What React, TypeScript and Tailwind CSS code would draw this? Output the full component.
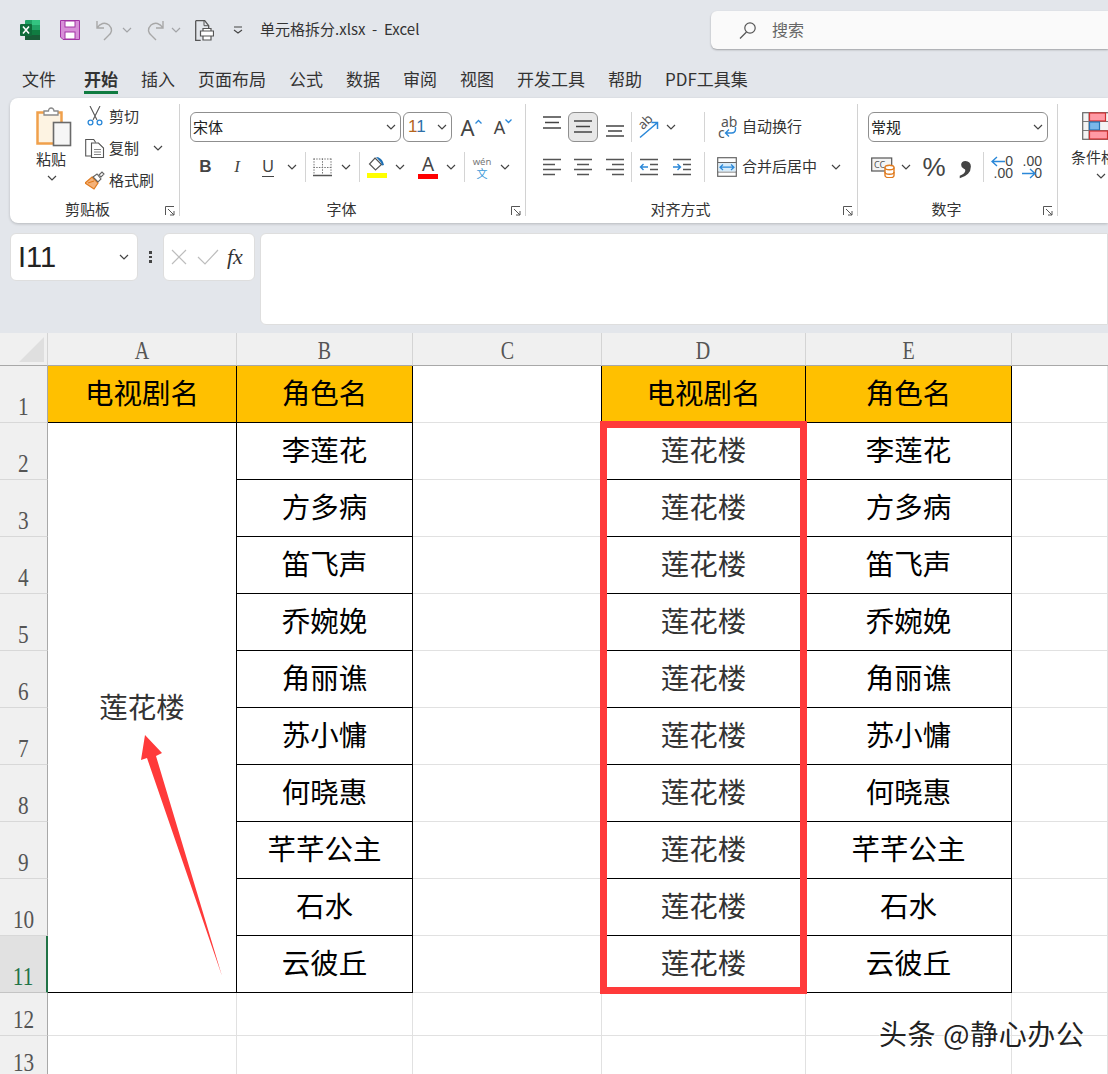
import type { ReactNode } from "react";

const tabs = ["文件", "开始", "插入", "页面布局", "公式", "数据", "审阅", "视图", "开发工具", "帮助", "PDF工具集"];
const columns = ["A", "B", "C", "D", "E"];
const roles = ["李莲花", "方多病", "笛飞声", "乔婉娩", "角丽谯", "苏小慵", "何晓惠", "芊芊公主", "石水", "云彼丘"];
const rowNumbers = [1, 2, 3, 4, 5, 6, 7, 8, 9, 10, 11, 12, 13];

function Chevron({ className = "" }: { className?: string }) {
  return (
    <svg width="10" height="6" viewBox="0 0 10 6" className={className}>
      <path d="M1 1l4 4 4-4" fill="none" stroke="#444" strokeWidth="1.2" />
    </svg>
  );
}

function Sep({ className = "" }: { className?: string }) {
  return <div className={`h-[30px] w-px bg-[#d4d4d4] ${className}`} />;
}

function Launcher() {
  return (
    <svg width="10" height="10" viewBox="0 0 10 10">
      <path d="M.5 9V.5H9M3 3l6 6M9 5v4H5" fill="none" stroke="#555" strokeWidth="1" />
    </svg>
  );
}

function Group({
  label,
  className,
  labelClass = "pr-[18px]",
  children,
}: {
  label: string;
  className: string;
  labelClass?: string;
  children: ReactNode;
}) {
  return (
    <div className={`flex h-[112px] shrink-0 flex-col border-r border-[#d2d2d2] ${className}`}>
      <div className="flex-1">{children}</div>
      <div className="grid grid-cols-[1fr_auto_1fr] items-end pr-[4px] text-[15px] leading-[14px] text-[#333]">
        <span />
        <span className={labelClass}>{label}</span>
        <span className="justify-self-end">
          <Launcher />
        </span>
      </div>
    </div>
  );
}

function Slot({ className, children }: { className: string; children?: ReactNode }) {
  return <div className={`flex h-[26px] shrink-0 items-center justify-center ${className}`}>{children}</div>;
}

function Combo({ className, children }: { className: string; children: ReactNode }) {
  return (
    <div className={`flex h-[30px] shrink-0 items-center justify-between rounded-md border border-[#8f8f8f] pl-[2px] pr-[4px] ${className}`}>
      <span className="text-[15px] text-[#222]">{children}</span>
      <Chevron />
    </div>
  );
}

// vertical alignment buttons, three lines placed at the given heights
function VAlign({ ys }: { ys: number[] }) {
  return (
    <svg width="20" height="30" viewBox="0 0 20 30">
      <path d={`M1 ${ys[0]}H19M3 ${ys[1]}H17M1 ${ys[2]}H19`} stroke="#444" strokeWidth="1.4" fill="none" />
    </svg>
  );
}

function AlignLines({ kind }: { kind: "left" | "center" | "right" }) {
  const a = kind === "left" ? "1" : kind === "center" ? "4" : "7";
  const b = kind === "left" ? "13" : kind === "center" ? "16" : "19";
  return (
    <svg width="20" height="20" viewBox="0 0 20 20">
      <path d={`M1 2.5H19M${a} 7.5H${b}M1 12.5H19M${a} 17.5H${b}`} stroke="#555" strokeWidth="1.4" fill="none" />
    </svg>
  );
}

function Indent({ out }: { out: boolean }) {
  return (
    <svg width="20" height="20" viewBox="0 0 20 20">
      <path d="M1 2.5H19M11 7.5H19M11 12.5H19M1 17.5H19" stroke="#555" strokeWidth="1.3" fill="none" />
      <path d={out ? "M9 10H1.5M4.5 7l-3 3 3 3" : "M1 10H8.5M5.5 7l3 3-3 3"} stroke="#2b88d8" strokeWidth="1.4" fill="none" />
    </svg>
  );
}

function ExcelLogo() {
  return (
    <svg width="20" height="20" viewBox="0 0 20 20">
      <rect x="5" y="0" width="15" height="20" rx="1" fill="#21a366" />
      <rect x="12" y="0" width="8" height="5" fill="#33c481" />
      <rect x="12" y="5" width="8" height="5" fill="#21a366" />
      <rect x="5" y="10" width="15" height="5" fill="#107c41" />
      <rect x="5" y="15" width="15" height="5" fill="#185c37" />
      <rect x="0" y="4" width="12" height="12" rx="1" fill="#0f6b3a" />
      <path d="M3 6.5l6 7M9 6.5l-6 7" stroke="#fff" strokeWidth="1.6" />
    </svg>
  );
}

function SaveIcon() {
  return (
    <svg width="20" height="20" viewBox="0 0 20 20">
      <path d="M.5.5h19v19H3L.5 17z" fill="#d78fd8" stroke="#a334a5" />
      <rect x="5" y="1" width="10" height="6" fill="#fff" stroke="#a334a5" />
      <rect x="5" y="12" width="10" height="7" fill="#fff" stroke="#a334a5" />
    </svg>
  );
}

function UndoIcon({ flip = false }: { flip?: boolean }) {
  return (
    <svg width="19" height="21" viewBox="0 0 19 21" className={flip ? "-scale-x-100" : ""}>
      <path d="M1 1v7h7M1 8c3-5 8-6 12-3 4 4 3 8-1 11l-4 4" fill="none" stroke="#a8a8a8" strokeWidth="1.4" />
    </svg>
  );
}

function PreviewIcon() {
  return (
    <svg width="19" height="21" viewBox="0 0 19 21">
      <path d="M.7.7h9l4 5v3M.7.7v19.6h5" fill="none" stroke="#555" strokeWidth="1.3" />
      <path d="M9 .7v5h4.7" fill="none" stroke="#555" strokeWidth="1" />
      <path d="M5.5 11h13v5h-13zM8 8.5h8V11H8zM8 16h8v4H8z" fill="#fff" stroke="#555" strokeWidth="1.2" />
    </svg>
  );
}

function SearchIcon() {
  return (
    <svg width="18" height="18" viewBox="0 0 18 18">
      <circle cx="11" cy="7" r="5.2" fill="none" stroke="#555" strokeWidth="1.2" />
      <path d="M7.5 11L1 17.5" stroke="#555" strokeWidth="1.2" />
    </svg>
  );
}

function PasteIcon() {
  return (
    <svg width="36" height="40" viewBox="0 0 36 40">
      <path d="M1.5 5.5h24v31h-24z" fill="#fdf3e2" stroke="#f0a04b" strokeWidth="2.5" />
      <path d="M8 8V4h4.5c0-4 5-4 5.5 0h4v4z" fill="#fff" stroke="#8a8a8a" strokeWidth="1.3" />
      <rect x="17.5" y="15.5" width="17" height="23" fill="#f6f6f6" stroke="#6a6a6a" strokeWidth="1.6" />
    </svg>
  );
}

function ScissorsIcon() {
  return (
    <svg width="16" height="20" viewBox="0 0 16 20">
      <path d="M3 0l7 14M13 0L6 14" stroke="#555" strokeWidth="1.1" fill="none" />
      <circle cx="3.5" cy="16.5" r="2.4" fill="none" stroke="#2b88d8" strokeWidth="1.3" />
      <circle cx="12.5" cy="16.5" r="2.4" fill="none" stroke="#2b88d8" strokeWidth="1.3" />
    </svg>
  );
}

function CopyIcon() {
  return (
    <svg width="20" height="20" viewBox="0 0 20 20">
      <path d="M6 18H.7V1.5h8l2 3" fill="none" stroke="#555" strokeWidth="1.1" />
      <path d="M6.5 5h7l5 5v9.5h-12z" fill="#fff" stroke="#555" strokeWidth="1.1" />
      <path d="M9 11.5h7M9 14h7M9 16.5h7" stroke="#777" strokeWidth="0.9" />
    </svg>
  );
}

function BrushIcon() {
  return (
    <svg width="20" height="19" viewBox="0 0 20 19">
      <path d="M7 6l6 6-4 6-9-6z" fill="#f4b27a" stroke="#e07b1f" strokeWidth="1.2" />
      <path d="M3 12l6-2" stroke="#e07b1f" strokeWidth="1.2" />
      <path d="M8 6l4-3 4 5-3 3z" fill="#fff" stroke="#666" strokeWidth="1.1" />
      <path d="M14 4l3-3 2 2-3 3z" fill="#fff" stroke="#666" strokeWidth="1.1" />
    </svg>
  );
}

function BordersIcon() {
  return (
    <svg width="19" height="19" viewBox="0 0 19 19">
      <path d="M.5 1H18.5M.5 9.5H18.5M1 .5V16M9.5.5V16M18 .5V16" stroke="#777" strokeWidth="1" strokeDasharray="1.5 1.2" fill="none" />
      <path d="M0 17.5H19" stroke="#555" strokeWidth="1.6" />
    </svg>
  );
}

function FillIcon() {
  return (
    <svg width="20" height="22" viewBox="0 0 20 22">
      <path d="M8 2l6.5 6.5L8.5 14 2.5 8z" fill="#fff" stroke="#555" strokeWidth="1.2" />
      <path d="M9 1c3 0 6 2 7 5l1 3-2 .5-1-3z" fill="#1c6fb5" />
      <rect x="0" y="17" width="20" height="5" fill="#ffff00" />
    </svg>
  );
}

function FontColorIcon() {
  return (
    <div className="flex w-[20px] flex-col items-center">
      <span className="text-[19px] leading-[17px] text-[#444] [font-family:'Noto_Sans',sans-serif]">A</span>
      <div className="mt-[1px] h-[5px] w-[20px] bg-[#ff0000]" />
    </div>
  );
}

function OrientIcon() {
  return (
    <svg width="22" height="22" viewBox="0 0 22 22" className="overflow-visible">
      <text x="1" y="11" fontSize="13" fill="#555" transform="rotate(-45 7 8)" fontFamily="Noto Sans">ab</text>
      <path d="M2 21.5L19 7M13.5 6.5h6V13" stroke="#2b88d8" strokeWidth="1.5" fill="none" />
    </svg>
  );
}

function WrapIcon() {
  return (
    <div className="relative h-[22px] w-[20px] text-[14px] leading-[11px] text-[#555] [font-family:'Noto_Sans',sans-serif]">
      <span className="block pl-[3px]">ab</span>
      <span className="block">c</span>
      <svg width="20" height="22" viewBox="0 0 20 22" className="absolute left-0 top-0">
        <path d="M17.5 11v2c0 3-1 4-4 4H8M11 13.5L7.5 17l3.5 3.5" stroke="#2b88d8" strokeWidth="1.4" fill="none" />
      </svg>
    </div>
  );
}

function MergeIcon() {
  return (
    <svg width="20" height="20" viewBox="0 0 20 20">
      <rect x=".7" y=".7" width="18.6" height="18.6" fill="#fff" stroke="#666" strokeWidth="1.2" />
      <path d="M.7 5.5H19.3M.7 15H19.3" stroke="#666" strokeWidth="1.2" />
      <rect x="1.5" y="6" width="17" height="8.5" fill="#d7ecfa" />
      <path d="M3 10.2H17M6 7.5l-3 2.7L6 13M14 7.5l3 2.7L14 13" stroke="#2b88d8" strokeWidth="1.2" fill="none" />
    </svg>
  );
}

function FormatIcon() {
  return (
    <svg width="24" height="22" viewBox="0 0 24 22">
      <rect x=".7" y="2" width="20" height="13" fill="#f4f4f4" stroke="#555" strokeWidth="1.2" />
      <text x="3" y="12" fontSize="9" fill="#555" fontFamily="Noto Sans">CC</text>
      <path d="M14 11.5c0-3 9-3 9 0v8c0 3-9 3-9 0z" fill="#fff" stroke="#e07b1f" strokeWidth="1.4" />
      <path d="M14 11.5c0 3 9 3 9 0M14 16c0 3 9 3 9 0" fill="none" stroke="#e07b1f" strokeWidth="1.4" />
    </svg>
  );
}

function DecimalIcon({ more }: { more: boolean }) {
  return (
    <div className={`relative h-[24px] w-[24px] text-right text-[14px] leading-[12px] text-[#444] [font-family:'Liberation_Sans',sans-serif] ${more ? "pr-[3px]" : ""}`}>
      <span className="block">{more ? ".00" : "0"}</span>
      <span className="block">{more ? "0" : ".00"}</span>
      <svg width="14" height="11" viewBox="0 0 14 11" className={`absolute ${more ? "left-[1px] top-[13px]" : "left-[2px] top-[1px]"}`}>
        <path d={more ? "M0 5.5H13M8 1l5 4.5L8 10" : "M14 5.5H1M6 1L1 5.5 6 10"} stroke="#2b88d8" strokeWidth="1.4" fill="none" />
      </svg>
    </div>
  );
}

function CondIcon() {
  return (
    <svg width="38" height="28" viewBox="0 0 38 28">
      <rect x=".7" y=".7" width="36" height="26.6" fill="#f4f4f4" stroke="#666" strokeWidth="1.2" />
      <path d="M7 1V27M.7 9.5H37M.7 18.5H37" stroke="#777" strokeWidth="1" />
      <rect x="7.5" y="1" width="16" height="8" fill="#ff9aa5" stroke="#d03232" strokeWidth="1.2" />
      <rect x="7.5" y="10" width="10" height="8" fill="#7ab7ea" stroke="#2573b5" strokeWidth="1.2" />
      <rect x="7.5" y="19" width="18" height="8" fill="#ff9aa5" stroke="#d03232" strokeWidth="1.2" />
    </svg>
  );
}

function Ribbon() {
  return (
    <div className="ml-[10px] flex h-[125px] overflow-hidden rounded-l-lg bg-white py-[6px] shadow-[0_1px_3px_rgba(0,0,0,0.2)]">
      <Group label="剪贴板" className="w-[170px]" labelClass="pr-[10px]">
        <div className="flex pl-[26px] pt-[3px]">
          <div className="flex w-[49px] flex-col items-start">
            <PasteIcon />
            <span className="mt-[1px] text-[15px] leading-[22px] text-[#333]">粘贴</span>
            <Chevron className="ml-[11px] mt-[5px]" />
          </div>
          <div className="-mt-[1px] flex flex-col gap-[12px] text-[15px] leading-[20px] text-[#333]">
            <div className="flex h-[20px] items-center gap-[6px] pl-[2px]">
              <ScissorsIcon />
              <span>剪切</span>
            </div>
            <div className="flex h-[20px] items-center gap-[4px]">
              <CopyIcon />
              <span>复制</span>
              <Chevron className="ml-[10px]" />
            </div>
            <div className="flex h-[20px] items-center gap-[4px]">
              <BrushIcon />
              <span>格式刷</span>
            </div>
          </div>
        </div>
      </Group>

      <Group label="字体" className="w-[346px]">
        <div className="flex pl-[10px] pt-[8px]">
          <Combo className="w-[211px]">宋体</Combo>
          <Combo className="ml-[2px] w-[49px]">
            <span className="pl-[2px] text-[17px] [font-family:'Liberation_Sans',sans-serif]">
              <span className="text-[#b5651d]">1</span>
              <span className="text-[#2f6fa8]">1</span>
            </span>
          </Combo>
          <Slot className="h-[30px] w-[38px]">
            <span className="relative text-[22px] leading-none text-[#444] [font-family:'Noto_Sans',sans-serif]">A</span>
            <svg width="7" height="5" viewBox="0 0 7 5" className="mb-[12px]"><path d="M.5 4.5l3-3 3 3" fill="none" stroke="#2b88d8" strokeWidth="1.3" /></svg>
          </Slot>
          <Slot className="h-[30px] w-[26px]">
            <span className="text-[18px] leading-none text-[#444] [font-family:'Noto_Sans',sans-serif]">A</span>
            <svg width="7" height="5" viewBox="0 0 7 5" className="mb-[12px]"><path d="M.5.5l3 3 3-3" fill="none" stroke="#2b88d8" strokeWidth="1.3" /></svg>
          </Slot>
        </div>
        <div className="mt-[10px] flex items-center pl-[10px] text-[#444] [font-family:'Liberation_Sans',sans-serif]">
          <Slot className="w-[31px] text-[17px] font-bold">B</Slot>
          <Slot className="w-[32px] text-[17px] italic [font-family:'Liberation_Serif',serif]">I</Slot>
          <Slot className="w-[30px]">
            <span className="border-b border-[#444] text-[16px] leading-[18px]">U</span>
          </Slot>
          <Slot className="w-[18px]"><Chevron /></Slot>
          <Sep className="ml-[4px]" />
          <Slot className="w-[32px]"><BordersIcon /></Slot>
          <Slot className="w-[16px]"><Chevron /></Slot>
          <Sep className="ml-[5px]" />
          <Slot className="w-[34px]"><FillIcon /></Slot>
          <Slot className="w-[12px]"><Chevron /></Slot>
          <Slot className="ml-[6px] w-[32px]"><FontColorIcon /></Slot>
          <Slot className="w-[14px]"><Chevron /></Slot>
          <Sep className="ml-[6px]" />
          <Slot className="w-[34px]">
            <div className="flex flex-col items-center">
              <span className="text-[9.5px] leading-[11px] text-[#777] [font-family:'Noto_Sans',sans-serif]">wén</span>
              <span className="text-[11px] leading-[12px] text-[#3a9ad9] [font-family:'Noto_Sans_CJK_SC',sans-serif]">文</span>
            </div>
          </Slot>
          <Slot className="w-[12px]"><Chevron /></Slot>
        </div>
      </Group>

      <Group label="对齐方式" className="w-[332px]">
        <div className="flex items-center pl-[10px] pt-[8px]">
          <Slot className="h-[30px] w-[31px]"><VAlign ys={[5, 10.5, 16]} /></Slot>
          <Slot className="ml-[1px] h-[30px] w-[30px] rounded-md border border-[#8f8f8f] bg-[#e8e8e8]"><VAlign ys={[9, 14.5, 20]} /></Slot>
          <Slot className="h-[30px] w-[33px]"><VAlign ys={[14, 19, 24]} /></Slot>
          <Sep />
          <Slot className="h-[30px] w-[34px]"><OrientIcon /></Slot>
          <Slot className="h-[30px] w-[10px]"><Chevron /></Slot>
          <Sep className="ml-[28px]" />
          <div className="ml-[13px]"><WrapIcon /></div>
          <span className="ml-[4px] pb-[2px] text-[15px] text-[#333]">自动换行</span>
        </div>
        <div className="mt-[10px] flex items-center pl-[10px]">
          <Slot className="w-[31px]"><AlignLines kind="left" /></Slot>
          <Slot className="ml-[1px] w-[30px]"><AlignLines kind="center" /></Slot>
          <Slot className="w-[33px]"><AlignLines kind="right" /></Slot>
          <Sep />
          <Slot className="w-[34px]"><Indent out /></Slot>
          <Slot className="w-[32px]"><Indent out={false} /></Slot>
          <Sep className="ml-[6px]" />
          <div className="ml-[12px]"><MergeIcon /></div>
          <span className="ml-[5px] pb-[2px] text-[15px] text-[#333]">合并后居中</span>
          <Chevron className="ml-[14px]" />
        </div>
      </Group>

      <Group label="数字" className="w-[200px]">
        <div className="pl-[10px] pt-[8px]">
          <Combo className="w-[180px]">常规</Combo>
        </div>
        <div className="mt-[10px] flex items-center pl-[10px]">
          <Slot className="w-[30px]"><FormatIcon /></Slot>
          <Slot className="w-[16px]"><Chevron /></Slot>
          <Slot className="w-[40px] text-[26px] text-[#444] [font-family:'Liberation_Sans',sans-serif]">%</Slot>
          <Slot className="w-[24px] overflow-visible">
            <span className="-translate-y-[17px] text-[56px] font-bold leading-none text-[#444] [font-family:'Liberation_Serif',serif]">,</span>
          </Slot>
          <Sep className="ml-[5px]" />
          <Slot className="w-[34px]"><DecimalIcon more={false} /></Slot>
          <Slot className="w-[30px]"><DecimalIcon more /></Slot>
        </div>
      </Group>

      <div className="flex w-[86px] shrink-0 flex-col items-center pt-[8px]">
        <CondIcon />
        <span className="mt-[6px] whitespace-nowrap text-[15px] leading-[22px] text-[#333]">条件格式</span>
        <Chevron className="mt-[5px]" />
      </div>
    </div>
  );
}

function FormulaBar() {
  return (
    <div className="ml-[10px] mt-[10px] flex items-start">
      <div className="flex h-[48px] w-[128px] items-center justify-between rounded-md border border-[#dedede] bg-white pl-[7px] pr-[8px]">
        <span className="text-[29px] leading-none text-[#222] [font-family:'Liberation_Sans',sans-serif]">I11</span>
        <Chevron />
      </div>
      <div className="flex h-[48px] w-[25px] flex-col items-center justify-center gap-[2px]">
        <div className="h-[2.5px] w-[2.5px] bg-[#444]" />
        <div className="h-[2.5px] w-[2.5px] bg-[#444]" />
        <div className="h-[2.5px] w-[2.5px] bg-[#444]" />
      </div>
      <div className="flex h-[48px] w-[92px] items-center rounded-md border border-[#dedede] bg-white pl-[7px]">
        <svg width="16" height="16" viewBox="0 0 16 16"><path d="M1 1l14 14M15 1L1 15" stroke="#bdbdbd" strokeWidth="1.2" /></svg>
        <svg width="22" height="16" viewBox="0 0 22 16" className="ml-[10px]"><path d="M1 8l7 7L21 1" fill="none" stroke="#bdbdbd" strokeWidth="1.2" /></svg>
        <span className="ml-[8px] text-[22px] italic leading-none text-[#333] [font-family:'Liberation_Serif',serif]">fx</span>
      </div>
      <div className="ml-[5px] h-[92px] flex-1 rounded-l-md border border-[#dedede] bg-white" />
    </div>
  );
}

const CELL = "flex items-center justify-center border-b border-r pb-[3px] text-[28.5px] leading-none";

function DataRow({ row }: { row: number }) {
  const inTable = row <= 11;
  const line = inTable ? "border-[#000]" : "border-[#e1e1e1]";
  const blank = inTable ? "border-b-[#e1e1e1] border-r-[#000]" : "border-[#e1e1e1]";
  const selected = row === 11;
  return (
    <>
      <div
        className={`flex items-end justify-center border-b border-r pb-[2px] text-[25px] leading-[26px] [font-family:'Liberation_Serif',serif] ${
          selected
            ? "border-b-[#c4c4c4] border-r-[2px] border-r-[#217346] bg-[#e1e1e1] text-[#217346]"
            : "border-b-[#d8d8d8] border-r-[#a8a8a8] bg-[#f0f0f0] text-[#555]"
        }`}
      >
        <span className="inline-block scale-x-[0.85]">{row}</span>
      </div>
      {row === 1 && <div className={`${CELL} ${line} bg-[#ffc000] text-black`}>电视剧名</div>}
      {row === 2 && <div className={`${CELL} row-span-10 border-[#000] text-[#333]`}>莲花楼</div>}
      {row > 11 && <div className={`${CELL} ${line}`} />}
      {row === 1 ? (
        <div className={`${CELL} ${line} bg-[#ffc000] text-black`}>角色名</div>
      ) : (
        <div className={`${CELL} ${line} text-black`}>{roles[row - 2]}</div>
      )}
      <div className={`${CELL} ${blank}`} />
      {row === 1 ? (
        <div className={`${CELL} ${line} bg-[#ffc000] text-black`}>电视剧名</div>
      ) : (
        <div className={`${CELL} ${line} text-[#333]`}>{inTable ? "莲花楼" : ""}</div>
      )}
      {row === 1 ? (
        <div className={`${CELL} ${line} bg-[#ffc000] text-black`}>角色名</div>
      ) : (
        <div className={`${CELL} ${line} text-black`}>{roles[row - 2]}</div>
      )}
      <div className={`${CELL} border-[#e1e1e1]`} />
    </>
  );
}

function Sheet() {
  return (
    <div className="relative mt-[8px] grid grid-cols-[48px_189px_176px_189px_204px_206px_96px] grid-rows-[33px_repeat(11,57px)_43px_43px] bg-white">
      <div className="flex items-center justify-end border-b border-r border-b-[#a8a8a8] border-r-[#d4d4d4] bg-[#f0f0f0] pr-[3px]">
        <svg width="25" height="25" viewBox="0 0 25 25"><path d="M25 0V25H0z" fill="#dfdfdf" /></svg>
      </div>
      {columns.map((c) => (
        <div key={c} className="flex items-center justify-center border-b border-r border-b-[#a8a8a8] border-r-[#d4d4d4] bg-[#f0f0f0] pt-[3px] text-[25px] leading-none text-[#555] [font-family:'Liberation_Serif',serif]">
          <span className="inline-block scale-x-[0.8]">{c}</span>
        </div>
      ))}
      <div className="border-b border-b-[#a8a8a8] bg-[#f0f0f0]" />
      {rowNumbers.map((row) => (
        <DataRow key={row} row={row} />
      ))}

      {/* annotations drawn over the sheet */}
      <div className="absolute left-[600px] top-[88px] h-[573px] w-[207px] border-[7px] border-[#ff3a3a]" />
      <svg width="90" height="250" viewBox="0 0 90 250" className="absolute left-[138px] top-[400px]">
        <path d="M7 2L24 20 18 23 84 243 9 25 3 27z" fill="#ff3a3a" />
      </svg>
      <div className="absolute left-[879px] top-[685px] whitespace-nowrap text-[28px] leading-[30px] tracking-[0.6px] text-[#222] [text-shadow:1px_1px_0_#fff,-1px_0_0_#fff]">
        头条 @静心办公
      </div>
    </div>
  );
}

export default function App() {
  return (
    <div className="h-[1074px] w-[1108px] overflow-hidden bg-[#e3e6eb] [font-family:'Noto_Sans_CJK_SC',sans-serif]">
      <div className="flex h-[60px] items-center">
        <div className="ml-[20px]"><ExcelLogo /></div>
        <div className="ml-[20px]"><SaveIcon /></div>
        <div className="ml-[16px]"><UndoIcon /></div>
        <Chevron className="ml-[7px] opacity-40" />
        <div className="ml-[13px]"><UndoIcon flip /></div>
        <Chevron className="ml-[7px] opacity-40" />
        <div className="ml-[14px]"><PreviewIcon /></div>
        <svg width="10" height="8" viewBox="0 0 10 8" className="ml-[19px]"><path d="M1 1H9M1 4l4 3 4-3" fill="none" stroke="#444" strokeWidth="1.1" /></svg>
        <span className="-mt-[2px] ml-[17px] w-[170px] whitespace-nowrap text-[15px] text-[#333]">单元格拆分.xlsx&nbsp; -&nbsp; Excel</span>
        <div className="-mt-[1px] ml-[281px] flex h-[38px] flex-1 items-center rounded-l-md bg-[#fafafa] pl-[28px] shadow-[0_1px_2px_rgba(0,0,0,0.3)]">
          <SearchIcon />
          <span className="ml-[15px] pb-[2px] text-[16px] text-[#666]">搜索</span>
        </div>
      </div>
      <div className="flex h-[38px] gap-[23px] pl-[22px] pt-[7px] text-[17px] leading-[24px] text-[#333]">
        {tabs.map((t) =>
          t === "开始" ? (
            <div key={t} className="ml-[5px] h-[27px] whitespace-nowrap border-b-[3px] border-[#107c41] font-bold">
              {t}
            </div>
          ) : (
            <div key={t} className="whitespace-nowrap">{t}</div>
          ),
        )}
      </div>
      <Ribbon />
      <FormulaBar />
      <Sheet />
    </div>
  );
}
